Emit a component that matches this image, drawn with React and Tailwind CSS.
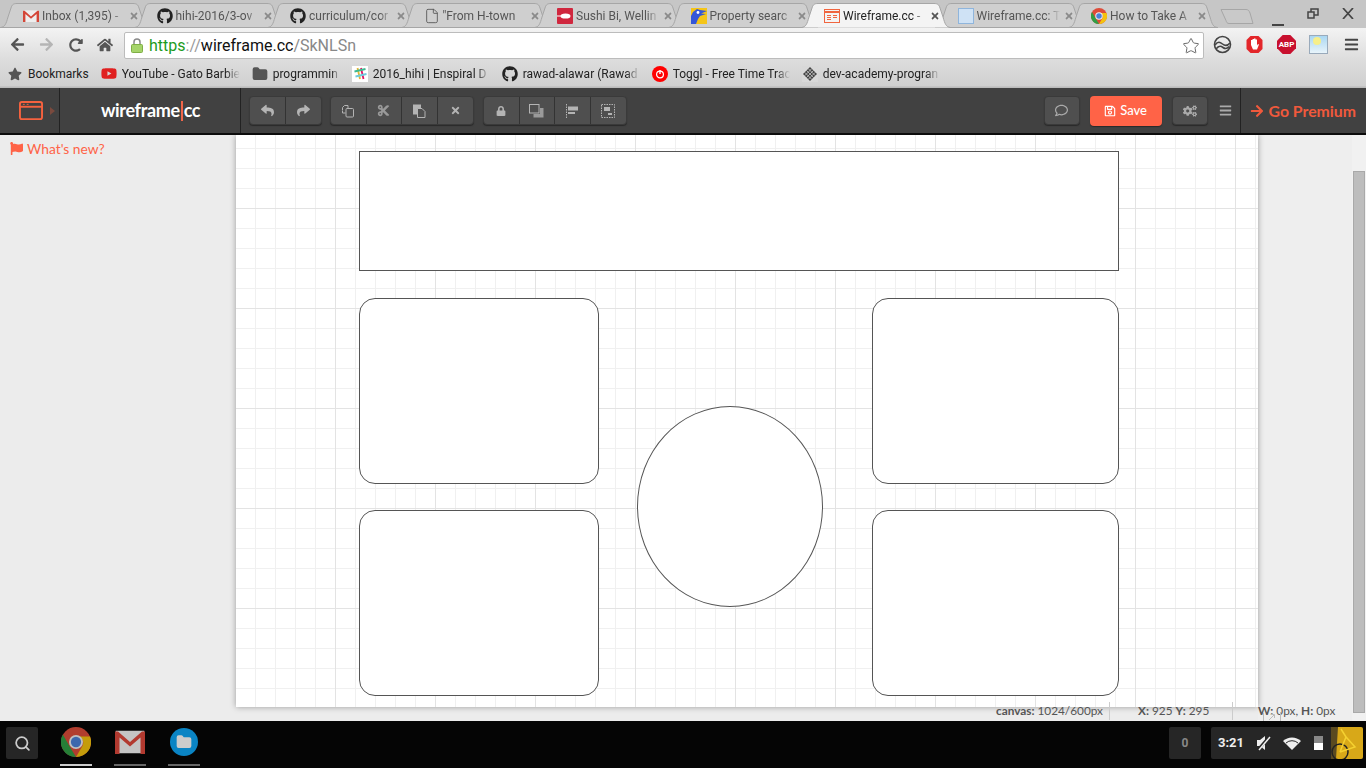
import { File, Search, Star, Folder } from 'lucide-react'
import {
  FaGithub, FaReply, FaShare, FaCut, FaTimes, FaLock, FaFlag, FaRegSave, FaCogs, FaBars,
  FaArrowRight, FaRegComment, FaStar, FaArrowLeft, FaRedoAlt, FaHome, FaYoutube,
} from 'react-icons/fa'

function GmailIcon({ size = 16, dim = false }) {
  return (
    <svg width={size} height={size * 0.8} viewBox="0 0 20 16">
      <rect x="0.5" y="0.5" width="19" height="15" fill={dim ? '#c4c4c4' : '#eee'} />
      <path d="M0 1v15h3V5l7 6 7-6v11h3V1h-2l-8 7-8-7z" fill={dim ? '#b23a30' : '#d44638'} />
    </svg>
  )
}

function ChromeIcon({ size = 16 }) {
  return (
    <svg width={size} height={size} viewBox="0 0 32 32">
      <circle cx="16" cy="16" r="16" fill="#dd4b39" />
      <path d="M2 8l8 14 6 10a16 16 0 0 1-14-24z" fill="#2f9e44" />
      <path d="M16 10h15a16 16 0 0 1-15 22l7-12a7 7 0 0 0-7-10z" fill="#f4c20d" />
      <circle cx="16" cy="16" r="7.5" fill="#eee" />
      <circle cx="16" cy="16" r="5.5" fill="#4a80d8" />
    </svg>
  )
}

function SushiIcon() {
  return (
    <svg width="16" height="16" viewBox="0 0 16 16">
      <rect width="16" height="16" rx="1" fill="#d0273e" />
      <ellipse cx="8.5" cy="8" rx="5" ry="2.6" fill="#fff" />
      <rect x="0" y="7.5" width="4" height="1" fill="#fff" />
    </svg>
  )
}

function BirdIcon() {
  return (
    <svg width="16" height="16" viewBox="0 0 16 16">
      <rect width="16" height="16" fill="#f5c518" />
      <path d="M0 16V8l2-4 4-3 3 1 7 1-6 2.5 5 .5-6 2-2 3-2 5z" fill="#3557d8" />
      <circle cx="7" cy="4.5" r="1.4" fill="#fff" />
    </svg>
  )
}

function WireframeLogo({ size = 16, color = '#f0653f', bar = false }) {
  return (
    <svg width={size} height={size * 0.8} viewBox="0 0 25 20" fill="none" stroke={color} strokeWidth="2">
      <rect x="1" y="1" width="23" height="18" rx="2" />
      <path d="M1 6h23" />
      {bar && <path d="M4 3.5h2M8 3.5h2" strokeWidth="1" />}
    </svg>
  )
}

function WireframeFavicon() {
  return (
    <svg width="16" height="14" viewBox="0 0 16 14" fill="none" stroke="#f0653f">
      <rect x="0.5" y="0.5" width="15" height="13" />
      <path d="M1 3h14" strokeWidth="2" />
      <path d="M3 6.5h4M3 8.5h4M3 10.5h4M9 6.5h4M9 8.5h4" strokeWidth="1" />
    </svg>
  )
}

function SlackIcon() {
  return (
    <svg width="16" height="16" viewBox="0 0 16 16">
      <rect width="16" height="16" fill="#fff" />
      <path d="M5.5 2l2.5 11" stroke="#e8b52f" strokeWidth="1.8" />
      <path d="M9 2l2.5 11" stroke="#e01563" strokeWidth="1.8" />
      <path d="M2.5 5.5l11-2.5" stroke="#3eb890" strokeWidth="1.8" />
      <path d="M3.5 10.5l11-2.5" stroke="#6ecadc" strokeWidth="1.8" />
    </svg>
  )
}

function TogglIcon() {
  return (
    <svg width="16" height="16" viewBox="0 0 16 16" fill="none">
      <circle cx="8" cy="8" r="8" fill="#f00" />
      <circle cx="8" cy="8.5" r="3.4" stroke="#fff" strokeWidth="1.2" />
      <path d="M8 4v4" stroke="#fff" strokeWidth="1.4" />
    </svg>
  )
}

function DevIcon() {
  return (
    <svg width="16" height="16" viewBox="0 0 16 16">
      <rect width="16" height="16" fill="#d8d8d8" />
      <path d="M8 1L15 8 8 15 1 8z" fill="#444" />
      <path d="M4.5 4.5l7 7M6.3 2.7l7 7M2.7 6.3l7 7M11.5 4.5l-7 7M9.7 2.7l-7 7M13.3 6.3l-7 7" stroke="#d8d8d8" strokeWidth="0.7" />
    </svg>
  )
}

function LockIcon() {
  return (
    <svg width="12" height="15" viewBox="0 0 12 15">
      <path d="M3 7V4a3 3 0 0 1 6 0v3" fill="none" stroke="#8a8a8a" strokeWidth="1.5" />
      <rect x="0.5" y="6.5" width="11" height="8" rx="1" fill="#a5d46a" stroke="#7fae45" />
    </svg>
  )
}

const tabs = [
  { title: 'Inbox (1,395) -', icon: <GmailIcon /> },
  { title: 'hihi-2016/3-ov', icon: <FaGithub size={16} color="#222" /> },
  { title: 'curriculum/cor', icon: <FaGithub size={16} color="#222" /> },
  { title: '"From H-town', icon: <File size={16} color="#555" strokeWidth={1.3} /> },
  { title: 'Sushi Bi, Wellin', icon: <SushiIcon /> },
  { title: 'Property searc', icon: <BirdIcon /> },
  { title: 'Wireframe.cc -', icon: <WireframeFavicon />, active: true },
  { title: 'Wireframe.cc: T', icon: <span className="w-[16px] h-[16px] bg-[#cfe2f5] border border-[#8fb5dc] block" /> },
  { title: 'How to Take A', icon: <ChromeIcon /> },
]

const bookmarks = [
  { title: 'YouTube - Gato Barbie', icon: <FaYoutube size={17} color="#e02020" />, w: 'w-[118px]' },
  { title: 'programmin', icon: <Folder size={16} fill="#555" color="#555" />, w: 'w-[67px]' },
  { title: '2016_hihi | Enspiral D', icon: <SlackIcon />, w: 'w-[117px]' },
  { title: 'rawad-alawar (Rawad', icon: <FaGithub size={16} color="#222" />, w: 'w-[117px]' },
  { title: 'Toggl - Free Time Trac', icon: <TogglIcon />, w: 'w-[117px]' },
  { title: 'dev-academy-progran', icon: <DevIcon />, w: 'w-[117px]' },
]

function Tab({ title, icon, active }) {
  return (
    <div className={`relative w-[133.5px] h-[28px] shrink-0 flex items-center pt-[4px] pl-[15px] gap-[3px] ${active ? 'z-10' : ''}`}>
      <svg className="absolute left-[-8px] top-0" width="150" height="28" viewBox="0 0 150 28">
        <path
          d="M0.5 27.5C5 27 6 24 8 17L11 8C12 4.5 13.5 3.5 17 3.5H133C136.5 3.5 138 4.5 139 8L142 17C144 24 145 27 149.5 27.5"
          fill={active ? '#f4f4f4' : '#cfcfcf'}
          stroke="#a6a6a6"
        />
        {!active && <path d="M0 27.5H150" stroke="#a6a6a6" />}
      </svg>
      <span className="relative w-[16px] h-[16px] flex items-center justify-center shrink-0">{icon}</span>
      <span className={`relative w-[83px] shrink-0 overflow-hidden whitespace-nowrap text-[12px] [mask-image:linear-gradient(to_right,black_85%,transparent)] ${active ? 'text-[#222]' : 'text-[#555]'}`}>
        {title}
      </span>
      <FaTimes className={`relative ml-[1px] shrink-0 ${active ? 'text-[#555]' : 'text-[#8a8a8a]'}`} size={10} />
    </div>
  )
}

function ToolButton({ children, last }) {
  return (
    <div className={`w-[35.5px] h-full flex items-center justify-center text-[#b4b4b4] ${last ? '' : 'border-r border-[#333]'}`}>
      {children}
    </div>
  )
}

function ToolGroup({ children, className = '' }) {
  return (
    <div className={`h-[29px] flex rounded-[4px] bg-[#4f4f4f] border border-[#3a3a3a] shadow-[0_1px_1px_#2a2a2a] ${className}`}>
      {children}
    </div>
  )
}

function CopyIcon() {
  return (
    <svg width="14" height="14" viewBox="0 0 14 14" fill="none" stroke="#b4b4b4">
      <path d="M1.5 6V3.5l2-2h3.5v3" />
      <path d="M1.5 6.5v2.5h3" />
      <rect x="5" y="4.5" width="7.5" height="8.5" rx="1" />
    </svg>
  )
}

function PasteIcon() {
  return (
    <svg width="14" height="14" viewBox="0 0 14 14" fill="#b4b4b4">
      <rect x="1" y="0.5" width="8" height="10" />
      <path d="M5.5 4.5h4.5l3 3v6h-7.5z" fill="#4f4f4f" stroke="#b4b4b4" />
    </svg>
  )
}

function LayerIcon() {
  return (
    <svg width="15" height="14" viewBox="0 0 15 14">
      <rect x="0.5" y="0.5" width="9.5" height="8.5" fill="none" stroke="#b4b4b4" />
      <path d="M11 4h3.5v9.5H4.5V10H11z" fill="#9a9a9a" />
    </svg>
  )
}

function AlignIcon() {
  return (
    <svg width="13" height="14" viewBox="0 0 13 14">
      <path d="M0.5 0v14" stroke="#b4b4b4" strokeDasharray="1.5 1" />
      <rect x="2" y="2.5" width="10" height="4" fill="#b4b4b4" />
      <rect x="2" y="8" width="7" height="2" fill="#b4b4b4" />
    </svg>
  )
}

function GroupIcon() {
  return (
    <svg width="14" height="14" viewBox="0 0 14 14">
      <rect x="0.5" y="0.5" width="13" height="13" fill="none" stroke="#b4b4b4" strokeDasharray="1.5 1" />
      <rect x="3" y="3" width="6" height="4" fill="#b4b4b4" />
      <rect x="7" y="9" width="4" height="2" fill="#b4b4b4" />
    </svg>
  )
}

function BrowserChrome() {
  return (
    <div className="font-['Roboto',sans-serif]">
      {/* tab strip */}
      <div className="h-[28px] bg-[#c6c6c6] flex pl-[8px] relative">
        {tabs.map((t) => (
          <Tab key={t.title} {...t} />
        ))}
        <svg className="ml-[10px] mt-[8px]" width="34" height="17" viewBox="0 0 34 17">
          <path d="M1 1.5H26C28 1.5 29 2.5 30 5L33 15.5H9C7 15.5 6.5 14 6 12.5z" fill="#c9c9c9" stroke="#a6a6a6" />
        </svg>
        <div className="ml-auto flex items-start gap-[23px] pr-[12px] pt-[8px]">
          <div className="w-[12px] h-[10px] border-b-2 border-[#444] mt-[8px]" />
          <svg width="12" height="11" viewBox="0 0 12 11" fill="none" stroke="#444" strokeWidth="1.5">
            <rect x="4" y="1" width="7" height="6" />
            <rect x="1" y="4" width="6" height="6" fill="#c6c6c6" />
          </svg>
          <svg width="12" height="11" viewBox="0 0 12 11" stroke="#444" strokeWidth="1.7">
            <path d="M1 0l10 11M11 0L1 11" />
          </svg>
        </div>
      </div>

      {/* address bar */}
      <div className="h-[33px] bg-[linear-gradient(#f3f3f3,#dcdcdc)] flex items-center pl-[10px]">
        <FaArrowLeft size={15} color="#555" />
        <FaArrowRight size={15} color="#b5b5b5" className="ml-[14px]" />
        <FaRedoAlt size={14} color="#555" className="ml-[15px]" />
        <FaHome size={16} color="#555" className="ml-[14px]" />
        <div className="ml-[11px] mt-[2px] w-[1080px] h-[27px] bg-white border border-[#bcbcbc] rounded-[2px] flex items-center pl-[6px] pr-[3px]">
          <LockIcon />
          <span className="ml-[6px] text-[16px] leading-none">
            <span className="text-[#1c9b1c]">https</span>
            <span className="text-[#999]">://</span>
            <span className="text-[#111]">wireframe.cc</span>
            <span className="text-[#888]">/SkNLSn</span>
          </span>
          <Star size={18} color="#666" strokeWidth={1.3} className="ml-auto" />
        </div>
        <div className="ml-[9px] flex items-center gap-[13px]">
          <svg width="19" height="19" viewBox="0 0 19 19" fill="none" stroke="#444" strokeWidth="1.6">
            <circle cx="9.5" cy="9.5" r="8" />
            <path d="M2 10c3-4 5-3 7.5-1s5 2 7.5-1M3 14c3-4 5-3 7-1.5s4 1.5 6-1" />
          </svg>
          <svg width="19" height="19" viewBox="0 0 19 19">
            <path d="M5.5 1h8l4 4v9l-4 4h-8l-4-4V5z" fill="#e3262a" />
            <path d="M6 10V5h1.5v3V4h1.5v4V3.5h1.5V8V4.5H12v6l1-1.5 1 .5-2 5H8z" fill="#fff" />
          </svg>
          <div className="w-[19px] h-[19px] bg-[#c8102e] [clip-path:polygon(30%_0,70%_0,100%_30%,100%_70%,70%_100%,30%_100%,0_70%,0_30%)] text-white text-[8px] font-bold flex items-center justify-center">
            ABP
          </div>
          <div className="w-[19px] h-[19px] bg-[linear-gradient(#a9d7f2,#e8f4fb)] border border-[#9ab] relative">
            <div className="absolute left-[3px] top-[1px] w-[8px] h-[8px] rounded-full bg-[#f6ef8a]" />
          </div>
          <FaBars size={15} color="#444" className="ml-[3px]" />
        </div>
      </div>

      {/* bookmarks bar */}
      <div className="h-[26px] bg-[linear-gradient(#dcdcdc,#d0d0d0)] flex items-center pl-[8px] text-[12px] text-[#222] border-b border-[#c4c4c4]">
        <FaStar size={14} color="#555" />
        <span className="ml-[6px] mr-[12px]">Bookmarks</span>
        {bookmarks.map((b) => (
          <div key={b.title} className="flex items-center mr-[12px]">
            <span className="w-[16px] h-[16px] flex items-center justify-center shrink-0">{b.icon}</span>
            <span className={`ml-[5px] overflow-hidden whitespace-nowrap [mask-image:linear-gradient(to_right,black_88%,transparent)] ${b.w}`}>
              {b.title}
            </span>
          </div>
        ))}
      </div>
    </div>
  )
}

function EditorToolbar() {
  return (
    <div className="h-[47px] bg-[#414141] border-b-2 border-[#0c0c0c] flex items-center font-['Lato',sans-serif] relative">
      <div className="w-[60px] h-full border-r border-[#222] flex items-center pl-[19px]">
        <WireframeLogo size={24} color="#f5623f" bar />
        <span className="ml-[7px] w-0 h-0 border-y-[4px] border-y-transparent border-l-[5px] border-l-[#7a4a3e]" />
      </div>
      <div className="w-[181px] h-full border-r border-[#222] flex items-center pl-[41px] text-[18px] font-bold text-white tracking-[-0.35px]">
        wireframe<span className="w-[2px] h-[20px] bg-[#f0654a] mx-[1px]" />cc
      </div>
      <ToolGroup className="ml-[8px]">
        <ToolButton><FaReply size={13} /></ToolButton>
        <ToolButton last><FaShare size={13} /></ToolButton>
      </ToolGroup>
      <ToolGroup className="ml-[8px]">
        <ToolButton><CopyIcon /></ToolButton>
        <ToolButton><FaCut size={13} className="text-[#999]" /></ToolButton>
        <ToolButton><PasteIcon /></ToolButton>
        <ToolButton last><FaTimes size={11} /></ToolButton>
      </ToolGroup>
      <ToolGroup className="ml-[9px]">
        <ToolButton><FaLock size={10} /></ToolButton>
        <ToolButton><LayerIcon /></ToolButton>
        <ToolButton><AlignIcon /></ToolButton>
        <ToolButton last><GroupIcon /></ToolButton>
      </ToolGroup>
      <div className="ml-auto flex items-center h-full">
        <ToolGroup className="w-[36px] items-center justify-center text-[#aaa]"><FaRegComment size={13} /></ToolGroup>
        <div className="ml-[10px] w-[72px] h-[30px] rounded-[4px] bg-[#ff6347] shadow-[0_1px_1px_#2a2a2a] flex items-center justify-center gap-[4px] text-[13px] font-medium text-white">
          <FaRegSave size={12} />
          Save
        </div>
        <ToolGroup className="ml-[10px] w-[36px] items-center justify-center text-[#aaa]"><FaCogs size={14} /></ToolGroup>
        <FaBars size={13} color="#aaa" className="ml-[11px]" />
        <div className="ml-[8px] h-full border-l border-[#222] pl-[9px] pr-[10px] flex items-center gap-[5px] text-[15.8px] font-bold text-[#f0593c]">
          <FaArrowRight size={14} />
          Go Premium
        </div>
      </div>
    </div>
  )
}

function Canvas() {
  const box = 'absolute bg-white border border-[#555]'
  return (
    <div className="relative w-[1022px] h-[572px] shrink-0 shadow-[0_0_6px_rgba(0,0,0,0.35)] bg-white bg-[linear-gradient(to_right,#e3e3e3_1px,transparent_1px),linear-gradient(to_bottom,#e3e3e3_1px,transparent_1px),linear-gradient(to_right,#f0f0f0_1px,transparent_1px),linear-gradient(to_bottom,#f0f0f0_1px,transparent_1px)] bg-[size:100px_100px,100px_100px,20px_20px,20px_20px] bg-[position:99px_73px,99px_73px,19px_13px,19px_13px]">
      <div className={`${box} left-[123px] top-[16px] w-[760px] h-[120px]`} />
      <div className={`${box} left-[123px] top-[163px] w-[240px] h-[186px] rounded-[16px]`} />
      <div className={`${box} left-[636px] top-[163px] w-[247px] h-[186px] rounded-[16px]`} />
      <div className={`${box} left-[123px] top-[375px] w-[240px] h-[186px] rounded-[16px]`} />
      <div className={`${box} left-[636px] top-[375px] w-[247px] h-[186px] rounded-[16px]`} />
      <div className={`${box} left-[401px] top-[271px] w-[186px] h-[201px] rounded-[50%]`} />
    </div>
  )
}

function Workspace() {
  return (
    <div className="h-[586px] bg-[#ececec] flex relative overflow-hidden font-['Lato',sans-serif]">
      <div className="w-[236px] shrink-0 pl-[10px] pt-[4px] flex items-start gap-[4px] text-[13.8px] text-[#ff6347]">
        <FaFlag size={13} className="mt-[3px]" />
        What's new?
      </div>
      <Canvas />
      <div className="w-[94px] bg-[#eeeeee]" />
      <div className="w-[14px] bg-[#f1f1f1] pt-[36px] px-[1px]">
        <div className="h-[542px] bg-[#bdbdbd] border border-[#a9a9a9]" />
      </div>

      {/* status line sits over the canvas edge */}
      <div className="absolute left-[996px] top-[569px] flex text-[11.8px] text-[#555] h-[14px] items-center whitespace-nowrap">
        <span className="w-[114px] border-r border-[#ccc]"><b>canvas:</b> 1024/600px</span>
        <span className="w-[123px] pl-[28px] border-r border-[#ccc]"><b>X:</b> 925 <b>Y:</b> 295</span>
        <span className="pl-[25px]"><b>W:</b> 0px, <b>H:</b> 0px</span>
      </div>
      <svg className="absolute left-[1263px] top-[577px]" width="18" height="9" viewBox="0 0 18 9" fill="none" stroke="#bbb">
        <path d="M0.5 9V1M17.5 0V9M6 8l5-5M8 2.5h3.5V6" />
      </svg>
    </div>
  )
}

function Shelf() {
  return (
    <div className="h-[47px] bg-[#050505] flex items-start pt-[6px] relative">
      <div className="ml-[6px] w-[32px] h-[32px] bg-[#262626] rounded-[2px] flex items-center justify-center">
        <Search size={17} color="#ccc" strokeWidth={2.5} />
      </div>
      <div className="ml-[22px] w-[32px] flex flex-col items-center">
        <div className="opacity-80"><ChromeIcon size={30} /></div>
        <div className="mt-[7px] w-[32px] h-[2px] bg-[#ccc]" />
      </div>
      <div className="ml-[22px] w-[32px] flex flex-col items-center">
        <div className="h-[30px] flex items-center"><GmailIcon size={30} dim /></div>
        <div className="mt-[7px] w-[32px] h-[2px] bg-[#666]" />
      </div>
      <div className="ml-[22px] w-[32px] flex flex-col items-center">
        <div className="w-[28px] h-[28px] mt-[1px] mb-[1px] rounded-full bg-[#0a84c4] flex items-center justify-center">
          <Folder size={16} color="#ccc" fill="#ccc" />
        </div>
        <div className="mt-[7px] w-[32px] h-[2px] bg-[#666]" />
      </div>
      <div className="ml-auto w-[32px] h-[32px] bg-[#262626] rounded-[2px] flex items-center justify-center text-[12px] font-bold text-[#888] font-['Roboto',sans-serif]">
        0
      </div>
      <div className="ml-[10px] mr-[3px] w-[152px] h-[32px] bg-[#262626] rounded-[2px] flex items-center pl-[7px] overflow-hidden font-['Roboto',sans-serif]">
        <span className="text-[13px] font-bold text-[#eee]">3:21</span>
        <svg className="ml-[13px]" width="14" height="16" viewBox="0 0 14 16" fill="#eee">
          <path d="M0 5h3l5-4v14l-5-4H0z" />
          <path d="M1 15L13 1" stroke="#262626" strokeWidth="3" />
          <path d="M2 15L13 2" stroke="#eee" strokeWidth="1.5" />
        </svg>
        <svg className="ml-[12px]" width="18" height="13" viewBox="0 0 18 13">
          <path d="M0 4a13 13 0 0 1 18 0l-9 9z" fill="#eee" />
          <path d="M3 6a9 9 0 0 1 12 0" stroke="#262626" fill="none" />
        </svg>
        <div className="ml-[13px] w-[9px] h-[14px] bg-[#888] relative">
          <div className="absolute bottom-0 left-0 right-0 h-[7px] bg-white" />
        </div>
        <svg className="ml-auto shrink-0" width="32" height="32" viewBox="0 0 32 32">
          <rect width="32" height="32" fill="#d8a818" />
          <path d="M0 0h7l-2 32H0z" fill="#5a4a20" />
          <circle cx="9" cy="25" r="8" fill="none" stroke="#222" strokeWidth="1.5" />
          <path d="M9 25L15 10l9 10-15 5M15 10L10 2" stroke="#f4d030" strokeWidth="1.5" fill="none" />
        </svg>
      </div>
    </div>
  )
}

export default function App() {
  return (
    <div className="w-[1366px] h-[768px] overflow-hidden">
      <BrowserChrome />
      <div className="h-[1px] bg-[#bbb]" />
      <EditorToolbar />
      <Workspace />
      <Shelf />
    </div>
  )
}
